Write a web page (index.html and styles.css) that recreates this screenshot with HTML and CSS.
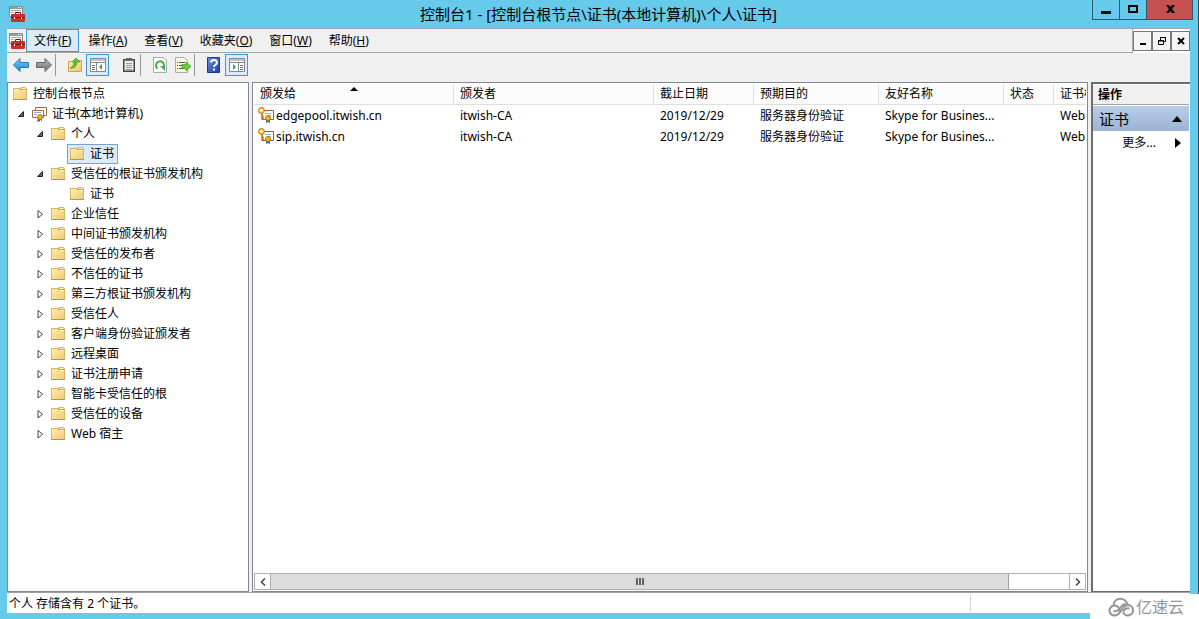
FILE: index.html
```html
<!DOCTYPE html>
<html lang="zh-CN">
<head>
<meta charset="utf-8">
<title>控制台1</title>
<link rel="stylesheet" href="styles.css">
</head>
<body>
<svg class="defs" width="0" height="0" aria-hidden="true">
  <defs>
    <linearGradient id="gFolder" x1="0" y1="0" x2="1" y2="1"><stop offset="0" stop-color="#fff0b0"/><stop offset="1" stop-color="#efca70"/></linearGradient>
    <linearGradient id="gBlue" x1="0" y1="0" x2="0" y2="1"><stop offset="0" stop-color="#7fd0f8"/><stop offset="1" stop-color="#1583d8"/></linearGradient>
    <linearGradient id="gGray" x1="0" y1="0" x2="0" y2="1"><stop offset="0" stop-color="#b5b5b5"/><stop offset="1" stop-color="#777"/></linearGradient>
    <linearGradient id="gHelp" x1="0" y1="0" x2="1" y2="1"><stop offset="0" stop-color="#6c8be0"/><stop offset="1" stop-color="#1c3ea8"/></linearGradient>
  </defs>
  <symbol id="folder" viewBox="0 0 16 16">
    <path d="M1.500 2.500H8l1-1h4.500l1 1v11h-13z" fill="url(#gFolder)" stroke="#d6b468"/>
    <path d="M9.500 2.500H13M10 4.500h4" stroke="#fff6d0" fill="none"/><path d="M9 3.500h5M8.500 2v2" stroke="#c9a350" fill="none"/>
    <path d="M1 13.500h14" stroke="#b8974c"/>
  </symbol>
  <symbol id="toolbox" viewBox="0 0 16 16">
    <path d="M.5.500h13v10H.5z" fill="#fff" stroke="#8b8b8b"/><path d="M1 2h12" stroke="#9b9b9b" stroke-width="2"/>
    <path d="M2 4.500h10M2 6.500h3M2 8.500h2" stroke="#aaa"/><path d="M9 1.500h4" stroke="#fff" stroke-dasharray="1 1"/>
    <path d="M6.500 8V6.500h5V8" fill="none" stroke="#5b1512"/>
    <rect x="2" y="8" width="14" height="8" rx="1" fill="#cf2f2a"/><path d="M2 11.500h14" stroke="#7e1714"/>
    <path d="M5 11h1v2H5zM12 11h1v2h-1z" fill="#fff"/>
  </symbol>
  <symbol id="certs" viewBox="0 0 16 16">
    <path d="M4.500 1.500h11v8h-11z" fill="#fff" stroke="#9b6a4c"/><path d="M1.500 4.500h11v7h-11z" fill="#fff" stroke="#9b6a4c"/>
    <path d="M3 6.500h7M3 8.500h3" stroke="#9aa9c9"/>
    <path d="M7 12l-1 4 2-1 1 1v-4zM9 12l2 4v-4z" fill="#2e63c9"/><circle cx="9" cy="11" r="2.500" fill="#f0b51c" stroke="#b17a08"/>
  </symbol>
  <symbol id="keycert" viewBox="0 0 16 16">
    <path d="M4.500 3.500h11v9h-11z" fill="#fff" stroke="#9b5c3c"/><path d="M7 6.500h6M9 8.500h4" stroke="#9aa9c9"/>
    <circle cx="3.500" cy="3.500" r="2.800" fill="#ffe089" stroke="#c68316" stroke-width="1.200"/><circle cx="3" cy="3" r="1" fill="#fff"/>
    <path d="M4 6v7M4 9.500h2M4 11.500h2" stroke="#c68316" stroke-width="1.600"/>
    <path d="M8 12v4l2-1v-3zM10 12v3l2 1v-4z" fill="#2e63c9"/><circle cx="10" cy="11" r="2.500" fill="#f0b51c" stroke="#b17a08"/>
  </symbol>
  <symbol id="open" viewBox="0 0 8 8"><path d="M6.500 1.500v5h-5z" fill="#666" stroke="#222"/></symbol>
  <symbol id="closed" viewBox="0 0 8 8"><path d="M2 .500v7.500l4.500-3.750z" fill="#fff" stroke="#333" stroke-width=".9"/></symbol>
</svg>

<div class="window">
  <header class="titlebar">
    <svg class="icon"><use href="#toolbox"/></svg>
    <h1 class="title">控制台1 - [控制台根节点\证书(本地计算机)\个人\证书]</h1>
    <div class="caption-buttons">
      <button class="caption minimize" aria-label="最小化"><svg width="12" height="12" viewBox="0 0 12 12"><path d="M1 7h10v3H1z"/></svg></button>
      <button class="caption maximize" aria-label="最大化"><svg width="12" height="12" viewBox="0 0 12 12"><path d="M2 2h8v6H2z" fill="none" stroke="#000" stroke-width="2"/></svg></button>
      <button class="caption close" aria-label="关闭"><svg width="12" height="12" viewBox="0 0 12 12"><path d="M2 1h3l1.500 2L8 1h3L8 5l3 4H8L6.500 7 5 9H2l3-4z"/></svg></button>
    </div>
  </header>

  <div class="frame">
    <nav class="menubar">
      <svg class="icon"><use href="#toolbox"/></svg>
      <button class="menu active">文件(<u>F</u>)</button>
      <button class="menu">操作(<u>A</u>)</button>
      <button class="menu">查看(<u>V</u>)</button>
      <button class="menu">收藏夹(<u>O</u>)</button>
      <button class="menu">窗口(<u>W</u>)</button>
      <button class="menu">帮助(<u>H</u>)</button>
      <div class="mdi">
        <button class="mdi-button" aria-label="最小化"><svg width="10" height="10" viewBox="0 0 10 10"><path d="M2 7h6v2H2z"/></svg></button>
        <button class="mdi-button" aria-label="还原"><svg width="10" height="10" viewBox="0 0 10 10"><path d="M3.500 4V1.500h5v4H7M3 1.500h6M1.500 4.500h5v4h-5zM1 5h6" fill="none" stroke="#000"/></svg></button>
        <button class="mdi-button" aria-label="关闭"><svg width="10" height="10" viewBox="0 0 10 10"><path d="M2 2l6 6M8 2L2 8" stroke="#000" stroke-width="2"/></svg></button>
      </div>
    </nav>

    <div class="toolbar">
      <button class="tool" aria-label="后退"><svg class="icon" viewBox="0 0 16 16"><path d="M.5 8L7 1.500v4h8.500v5H7v4z" fill="url(#gBlue)" stroke="#2577b8"/></svg></button>
      <button class="tool" aria-label="前进"><svg class="icon" viewBox="0 0 16 16"><path d="M15.500 8L9 1.500v4H.5v5H9v4z" fill="url(#gGray)" stroke="#666"/></svg></button>
      <span class="separator"></span>
      <button class="tool" aria-label="上移一级"><svg class="icon" viewBox="0 0 16 16"><path d="M1.500 4.500H8l1-1h5.500v11h-13z" fill="url(#gFolder)" stroke="#c9a350"/><path d="M3 11c3-1 4-3 4-6H5l4-4 4 4h-3c0 4-3 7-7 6z" fill="#5fbf3a" stroke="#3c9222" stroke-width=".6"/></svg></button>
      <button class="tool pressed" aria-label="显示/隐藏控制台树"><svg class="icon" viewBox="0 0 16 16"><path d="M.5 1.500h15v13H.5z" fill="#fff" stroke="#85888e"/><path d="M1 3h14M1 5.500h14" stroke="#85888e"/><path d="M6.500 6v8" stroke="#85888e"/><path d="M2 8.500h3M2 10.500h3M2 12.500h3" stroke="#5175b5"/><path d="M12 7v6l-3-3z" fill="#3ba33b"/></svg></button>
      <span class="space"></span>
      <button class="tool" aria-label="粘贴"><svg class="icon" viewBox="0 0 16 16"><path d="M2.750 2.750h10.500v11.500H2.750z" fill="#eee" stroke="#444" stroke-width="1.500"/><path d="M5 1h6v3H5z" fill="#666"/><path d="M5 6.500h6M5 8.500h6M5 10.500h6M5 12.500h6" stroke="#999"/></svg></button>
      <span class="separator"></span>
      <button class="tool" aria-label="刷新"><svg class="icon" viewBox="0 0 16 16"><path d="M1.500.500h10l3 3v12h-13z" fill="#fff" stroke="#aaa"/><path d="M5.500 11.500A4 4 0 1 1 11 11" fill="none" stroke="#45ad45" stroke-width="2"/><path d="M8 9h5v5z" fill="#45ad45"/></svg></button>
      <button class="tool" aria-label="导出列表"><svg class="icon" viewBox="0 0 16 16"><path d="M.5.500h9l3 3v12H.5z" fill="#fff8dc" stroke="#aaa"/><path d="M2 5.500h1M4 5.500h6M2 8.500h1M4 8.500h4M2 11.500h1M4 11.500h5" stroke="#555"/><path d="M7 7.500h4V5l5 4.500-5 4.500v-2.500H7z" fill="#68cf3d" stroke="#399a23" stroke-width=".7"/></svg></button>
      <span class="separator"></span>
      <button class="tool" aria-label="帮助"><svg class="icon" viewBox="0 0 16 16"><path d="M1.500.500h12v15h-12z" fill="url(#gHelp)" stroke="#23397e"/><path d="M5 5.500c0-3.500 6-3.500 6 0C11 8 8 7.500 8 10" fill="none" stroke="#fff" stroke-width="2"/><path d="M7 11.500h2v2H7z" fill="#fff"/></svg></button>
      <button class="tool pressed" aria-label="显示/隐藏操作窗格"><svg class="icon" viewBox="0 0 16 16"><path d="M.5 1.500h15v13H.5z" fill="#fff" stroke="#85888e"/><path d="M1 3h14M1 5.500h14" stroke="#85888e"/><path d="M9.500 6v8" stroke="#85888e"/><path d="M11 8.500h3M11 10.500h3M11 12.500h3" stroke="#5175b5"/><path d="M4 7v6l3-3z" fill="#3ba33b"/></svg></button>
    </div>

    <main class="panes">
      <ul class="tree">
        <li class="node root"><svg class="icon"><use href="#folder"/></svg><span>控制台根节点</span></li>
        <li class="node level1"><svg class="expander"><use href="#open"/></svg><svg class="icon"><use href="#certs"/></svg><span>证书(本地计算机)</span></li>
        <li class="node level2"><svg class="expander"><use href="#open"/></svg><svg class="icon"><use href="#folder"/></svg><span>个人</span></li>
        <li class="node level3"><span class="selected"><svg class="icon"><use href="#folder"/></svg><span>证书</span></span></li>
        <li class="node level2"><svg class="expander"><use href="#open"/></svg><svg class="icon"><use href="#folder"/></svg><span>受信任的根证书颁发机构</span></li>
        <li class="node level3"><span class="leaf"><svg class="icon"><use href="#folder"/></svg><span>证书</span></span></li>
        <li class="node level2"><svg class="expander"><use href="#closed"/></svg><svg class="icon"><use href="#folder"/></svg><span>企业信任</span></li>
        <li class="node level2"><svg class="expander"><use href="#closed"/></svg><svg class="icon"><use href="#folder"/></svg><span>中间证书颁发机构</span></li>
        <li class="node level2"><svg class="expander"><use href="#closed"/></svg><svg class="icon"><use href="#folder"/></svg><span>受信任的发布者</span></li>
        <li class="node level2"><svg class="expander"><use href="#closed"/></svg><svg class="icon"><use href="#folder"/></svg><span>不信任的证书</span></li>
        <li class="node level2"><svg class="expander"><use href="#closed"/></svg><svg class="icon"><use href="#folder"/></svg><span>第三方根证书颁发机构</span></li>
        <li class="node level2"><svg class="expander"><use href="#closed"/></svg><svg class="icon"><use href="#folder"/></svg><span>受信任人</span></li>
        <li class="node level2"><svg class="expander"><use href="#closed"/></svg><svg class="icon"><use href="#folder"/></svg><span>客户端身份验证颁发者</span></li>
        <li class="node level2"><svg class="expander"><use href="#closed"/></svg><svg class="icon"><use href="#folder"/></svg><span>远程桌面</span></li>
        <li class="node level2"><svg class="expander"><use href="#closed"/></svg><svg class="icon"><use href="#folder"/></svg><span>证书注册申请</span></li>
        <li class="node level2"><svg class="expander"><use href="#closed"/></svg><svg class="icon"><use href="#folder"/></svg><span>智能卡受信任的根</span></li>
        <li class="node level2"><svg class="expander"><use href="#closed"/></svg><svg class="icon"><use href="#folder"/></svg><span>受信任的设备</span></li>
        <li class="node level2"><svg class="expander"><use href="#closed"/></svg><svg class="icon"><use href="#folder"/></svg><span>Web 宿主</span></li>
      </ul>

      <section class="list">
        <div class="list-view">
          <table class="grid">
            <colgroup><col class="wide"><col class="wide"><col class="date"><col class="medium"><col class="medium"><col class="narrow"><col></colgroup>
            <thead>
              <tr>
                <th>颁发给<svg class="sort" width="8" height="4" viewBox="0 0 8 4"><path d="M0 4l4-4 4 4z"/></svg></th>
                <th>颁发者</th><th>截止日期</th><th>预期目的</th><th>友好名称</th><th>状态</th><th>证书模</th>
              </tr>
            </thead>
            <tbody>
              <tr><td class="name"><svg class="icon"><use href="#keycert"/></svg>edgepool.itwish.cn</td><td>itwish-CA</td><td>2019/12/29</td><td>服务器身份验证</td><td>Skype for Busines...</td><td></td><td>Web</td></tr>
              <tr><td class="name"><svg class="icon"><use href="#keycert"/></svg>sip.itwish.cn</td><td>itwish-CA</td><td>2019/12/29</td><td>服务器身份验证</td><td>Skype for Busines...</td><td></td><td>Web</td></tr>
            </tbody>
          </table>
        </div>
        <div class="scrollbar">
          <button class="scroll-button" aria-label="向左滚动"><svg width="6" height="8" viewBox="0 0 6 8"><path d="M5 .500L1.500 4 5 7.500" fill="none" stroke="#444" stroke-width="1.500"/></svg></button>
          <div class="track"><div class="thumb"><svg width="8" height="7" viewBox="0 0 8 7"><path d="M0 0h2v7H0zM3 0h2v7H3zM6 0h2v7H6z" fill="#606060"/></svg></div></div>
          <button class="scroll-button" aria-label="向右滚动"><svg width="6" height="8" viewBox="0 0 6 8"><path d="M1 .500L4.500 4 1 7.500" fill="none" stroke="#444" stroke-width="1.500"/></svg></button>
        </div>
      </section>

      <aside class="actions">
        <h2 class="actions-title">操作</h2>
        <button class="actions-group">证书<svg width="10" height="6" viewBox="0 0 10 6"><path d="M0 6l5-6 5 6z"/></svg></button>
        <button class="actions-more">更多...<svg width="6" height="10" viewBox="0 0 6 10"><path d="M0 0l6 5-6 5z"/></svg></button>
      </aside>
    </main>

    <footer class="status"><span class="status-text">个人 存储含有 2 个证书。</span><span class="status-cell"></span></footer>
  </div>

  <div class="watermark">
    <svg width="26" height="20" viewBox="0 0 26 20"><g fill="none" stroke="#92949c" stroke-width="2"><path d="M5.500 8C6.500-.5 18-.5 19.500 8"/><path d="M10.500 10.500a5 5 0 1 0-4 8c4 0 5-2.500 7-5.500s3.500-5 6.500-5a5.200 5.200 0 1 1-5 7"/><path d="M5.500 14c3 1 5-1 6.500-3s3-4 5.500-4"/><path d="M10.500 10.500c1.500 1.500 1.500 3 1 5M21.500 11.500c-3-1-5 .5-6.500 3"/></g></svg>
    <span>亿速云</span>
  </div>
</div>
</body>
</html>
```
FILE: styles.css
```css
* { box-sizing: border-box; }

body {
  margin: 0;
  color: #000;
  font: 12px/20px "Noto Sans", "Noto Sans CJK SC", sans-serif;
}

button {
  margin: 0;
  padding: 0;
  border: 0;
  background: none;
  color: inherit;
  font: inherit;
}

.defs { position: absolute; }
svg { flex: none; }
.icon { width: 16px; height: 16px; }

.window {
  position: relative;
  display: flex;
  flex-direction: column;
  height: 100vh;
  padding: 0 8px 6px 7px;
  border-right: 1px solid #2b4a58;
  background: #66caeb;
}

/* Title bar */
.titlebar {
  display: flex;
  align-items: center;
  height: 28px;
  padding-left: 2px;
}
.title {
  flex: 1;
  margin: 0;
  padding-left: 80px;
  font-size: 15px;
  font-weight: 400;
  text-align: center;
}
.caption-buttons {
  display: flex;
  align-self: flex-start;
  height: 20px;
  margin-right: -3px;
  border: 1px solid #2a5b70;
  border-top: 0;
}
.caption {
  display: flex;
  align-items: center;
  justify-content: center;
  width: 27px;
  border-right: 1px solid #2a5b70;
}
.caption.close {
  width: 45px;
  border-right: 0;
  background: #c75050;
}

.frame {
  display: flex;
  flex: 1;
  flex-direction: column;
  min-height: 0;
  background: #f0f0f0;
}

/* Menu */
.menubar {
  display: flex;
  align-items: center;
  gap: 1px;
  height: 25px;
  padding-left: 2px;
  border-top: 1px solid #9aa8ad;
  border-bottom: 1px solid #a5a5a5;
}
.menu {
  height: 23px;
  padding: 0 8px;
}
.menu.active {
  padding: 0 7px;
  border: 1px solid #3c98dc;
  background: #d9ebfb;
}
.mdi {
  display: flex;
  height: 24px;
  margin-left: auto;
  padding: 2px 0;
  border-left: 1px solid #a5a5a5;
  background: #fff;
}
.mdi-button {
  display: flex;
  align-items: center;
  justify-content: center;
  width: 19px;
  border: 1px solid #777;
  background: #f4f4f4;
}

/* Toolbar */
.toolbar {
  display: flex;
  align-items: center;
  height: 29px;
  padding: 0 2px 5px 2px;
}
.tool {
  display: flex;
  align-items: center;
  justify-content: center;
  width: 23px;
  height: 22px;
}
.tool.pressed {
  border: 1px solid #3c98dc;
  background: #d9ebfb;
}
.separator {
  width: 1px;
  height: 22px;
  margin-right: 7px;
  background: #999;
}
.space { width: 8px; }

/* Panes */
.panes {
  display: flex;
  flex: 1;
  gap: 3px;
  min-height: 0;
}
.tree {
  width: 242px;
  margin: 0;
  padding: 1px 0;
  border: 1px solid #828790;
  background: #fff;
  list-style: none;
}
.node {
  display: flex;
  align-items: center;
  gap: 5px;
  height: 20px;
  white-space: nowrap;
}
.expander { width: 8px; height: 8px; margin-right: 1px; }
.root { padding-left: 4px; }
.level1 { padding-left: 9px; }
.level2 { padding-left: 28px; }
.level3 { padding-left: 59px; }
.leaf,
.selected {
  display: flex;
  align-items: center;
  gap: 5px;
  padding: 0 3px 0 1px;
  border: 1px solid transparent;
  line-height: 18px;
}
.selected {
  border-color: #7da2ce;
  background: #dcebfc;
}

.list {
  display: flex;
  flex: 1;
  flex-direction: column;
  min-width: 0;
  padding: 1px;
  border: 1px solid #828790;
  background: #fff;
}
.list-view {
  flex: 1;
  min-height: 0;
  overflow: hidden;
}
.grid {
  width: 100%;
  border-collapse: separate;
  border-spacing: 0;
  table-layout: fixed;
}
.wide { width: 200px; }
.date { width: 100px; }
.medium { width: 125px; }
.narrow { width: 50px; }
.grid th,
.grid td {
  height: 21px;
  padding: 0 0 0 6px;
  overflow: hidden;
  font-weight: 400;
  line-height: 20px;
  text-align: left;
  white-space: nowrap;
}
.grid th {
  position: relative;
  border-right: 1px solid #dedfe1;
  border-bottom: 1px solid #dedfe1;
  background: #fcfcfc;
}
.grid th:last-child { border-right: 0; }
.sort {
  position: absolute;
  top: 3px;
  left: 96px;
}
.grid .name { padding-left: 4px; }
.name .icon {
  margin-right: 2px;
  vertical-align: -3px;
}

.scrollbar {
  display: flex;
  height: 17px;
}
.scroll-button {
  display: flex;
  align-items: center;
  justify-content: center;
  width: 17px;
  border: 1px solid #b0b0b0;
  background: #fff;
}
.track {
  flex: 1;
  border: 1px solid #b0b0b0;
  border-width: 1px 0;
}
.thumb {
  display: flex;
  align-items: center;
  justify-content: center;
  width: 92.5%;
  height: 100%;
  border-right: 1px solid #a0a0a0;
  background: #dcdcdc;
}

/* Actions */
.actions {
  width: 99px;
  padding: 1px 1px 1px 0;
  border: solid #6d6d6d;
  border-width: 2px 0 1px 2px;
  background: #fff;
}
.actions-title {
  height: 20px;
  margin: 0 0 1px;
  padding-left: 5px;
  border-bottom: 1px solid #a5a5a5;
  background: #f0f0f0;
  font-size: 12px;
  font-weight: 700;
  line-height: 20px;
}
.actions-group {
  display: flex;
  align-items: center;
  justify-content: space-between;
  width: 100%;
  height: 25px;
  padding: 0 7px 0 6px;
  background: linear-gradient(#b7cde7, #9bb4d4);
  font-size: 15px;
}
.actions-more {
  display: flex;
  align-items: center;
  justify-content: flex-end;
  gap: 19px;
  width: 100%;
  height: 24px;
  padding-right: 8px;
}

/* Status bar */
.status {
  display: flex;
  height: 21px;
  border-top: 1px solid #a0a0a0;
  background: #fff;
  line-height: 22px;
}
.status-text {
  flex: 1;
  padding-left: 2px;
}
.status-cell {
  width: 220px;
  margin: 2px 0;
  border-left: 1px solid #d0d0d0;
}

.watermark {
  position: absolute;
  right: -1px;
  bottom: 0;
  display: flex;
  align-items: center;
  gap: 2px;
  width: 109px;
  height: 25px;
  padding-left: 18px;
  background: #fff;
  color: #92949c;
  font-size: 16px;
}
```
